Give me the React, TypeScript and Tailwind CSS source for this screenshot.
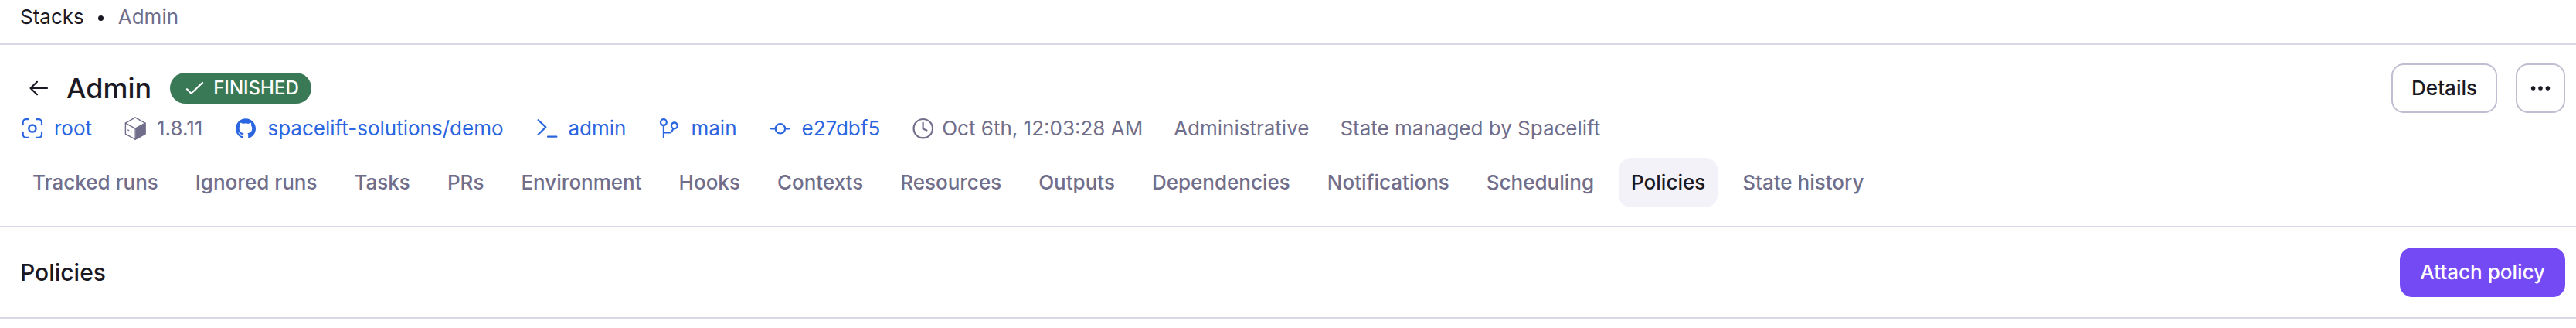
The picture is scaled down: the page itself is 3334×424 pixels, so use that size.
import type { ReactNode } from "react";
import { SiGithub } from "react-icons/si";

const TABS = [
  "Tracked runs",
  "Ignored runs",
  "Tasks",
  "PRs",
  "Environment",
  "Hooks",
  "Contexts",
  "Resources",
  "Outputs",
  "Dependencies",
  "Notifications",
  "Scheduling",
  "Policies",
  "State history",
];

function Icon({ children }: { children: ReactNode }) {
  return (
    <svg
      viewBox="0 0 32 32"
      fill="none"
      stroke="currentColor"
      strokeWidth="2.2"
      strokeLinecap="round"
      strokeLinejoin="round"
      className="size-8 shrink-0"
    >
      {children}
    </svg>
  );
}

const SpaceIcon = () => (
  <Icon>
    <path d="M3.7 11.2V8.2A4 4 0 0 1 7.7 4.2h2.9M21.1 4.2H24a4 4 0 0 1 4 4v3M28 20.8v3a4 4 0 0 1-4 4h-2.9M10.6 27.8H7.7a4 4 0 0 1-4-4v-3" />
    <circle cx="15.9" cy="16" r="4.6" strokeWidth="2.5" />
  </Icon>
);

const CubeIcon = () => (
  <Icon>
    <path d="M16 1.9 28.9 9.2v14L16 30.1 3.4 23.2V9.2z" strokeWidth="1.4" />
    <path d="M3.4 9.2 16 16.2 28.9 9.2" strokeWidth="1.4" />
    <path d="M16.2 16.4 29.2 9.2v14l-13 7.2z" fill="currentColor" strokeWidth="0.8" />
    <path d="m6.6 18 1.2.6M10.4 20l1.2.6" strokeWidth="1.2" />
  </Icon>
);

const GithubIcon = () => (
  <span className="flex size-8 items-center justify-center">
    <SiGithub className="size-[26px]" />
  </span>
);

const TerminalIcon = () => (
  <Icon>
    <path d="m4.6 5.2 9.8 9.2-9.8 9.4M17 26.7h11.4" />
  </Icon>
);

const BranchIcon = () => (
  <Icon>
    <circle cx="8.9" cy="8.1" r="3.9" strokeWidth="2.3" />
    <circle cx="22.8" cy="12.4" r="3.9" strokeWidth="2.3" />
    <path d="M8.9 12.2V28M8.9 21.4h7.9c1.4 0 2-.5 2.6-1.5l1.9-3.5" />
  </Icon>
);

const CommitIcon = () => (
  <Icon>
    <circle cx="15.9" cy="16.3" r="6.2" />
    <path d="M3.8 16.3h5.9M22.1 16.3h5.6" />
  </Icon>
);

const ClockIcon = () => (
  <Icon>
    <circle cx="15.8" cy="16.2" r="12.2" />
    <path d="M15.6 8.6v7.8l4.8 2.2" />
  </Icon>
);

type MetaProps = { icon?: ReactNode; link?: boolean; tight?: boolean; children: ReactNode };

function Meta({ icon, link, tight, children }: MetaProps) {
  return (
    <div
      className={`flex h-8 items-center ${tight ? "gap-2" : "gap-3"} ${link ? "text-[#2b65e0]" : "text-[#706e8a]"}`}
    >
      {icon}
      <span>{children}</span>
    </div>
  );
}

export default function App() {
  return (
    <div className="h-[424px] w-full overflow-hidden bg-white font-['Inter',sans-serif] text-[26px] leading-8 whitespace-nowrap text-[#1a1923]">
      <nav className="flex h-[58px] items-start border-b-2 border-[#d9d7e8] pt-1.5 pl-[26px]">
        <span>Stacks</span>
        <span className="mt-[14px] ml-[18px] size-[7px] rounded-full bg-[#1a1923]" />
        <span className="ml-[19px] text-[#706e8a]">Admin</span>
      </nav>

      <header className="flex h-[236px] items-start justify-between border-b-2 border-[#d9d7e8] pt-6 pr-[14px] pl-[26px]">
        <div className="flex flex-col pt-2.5">
          <div className="flex h-11 items-center">
            <button className="flex w-12 justify-center">
              <Icon>
                <path d="M27 16H5.5M14 7.8 5.5 16l8.5 8.2" />
              </Icon>
            </button>
            <h1 className="ml-3 text-[36px] leading-[44px] font-medium">Admin</h1>
            <div className="ml-6 flex h-10 items-center rounded-full bg-[#397956] px-4 text-white">
              <Icon>
                <path d="m6 17.2 5.4 5.6L26 9" />
              </Icon>
              <span className="ml-2 text-2xl font-medium">FINISHED</span>
            </div>
          </div>

          <div className="mt-[14px] flex gap-10">
            <Meta link icon={<SpaceIcon />}>root</Meta>
            <Meta icon={<CubeIcon />}>1.8.11</Meta>
            <Meta link icon={<GithubIcon />}>spacelift-solutions/demo</Meta>
            <Meta link icon={<TerminalIcon />}>admin</Meta>
            <Meta link icon={<BranchIcon />}>main</Meta>
            <Meta link icon={<CommitIcon />}>e27dbf5</Meta>
            <Meta tight icon={<ClockIcon />}>Oct 6th, 12:03:28 AM</Meta>
            <Meta>Administrative</Meta>
            <Meta>State managed by Spacelift</Meta>
          </div>

          <div className="mt-[22px] flex gap-4 font-medium">
            {TABS.map((tab) => (
              <button
                key={tab}
                className={`flex h-16 items-center rounded-2xl px-4 ${
                  tab === "Policies" ? "bg-[#f3f2f9] text-[#1a1923]" : "text-[#706e8a]"
                }`}
              >
                {tab}
              </button>
            ))}
          </div>
        </div>

        <div className="flex gap-6 font-medium">
          <button className="flex h-16 items-center rounded-2xl border-2 border-[#c1bed1] px-6">Details</button>
          <button className="flex size-16 items-center justify-center rounded-2xl border-2 border-[#c1bed1]">
            <svg viewBox="0 0 32 32" fill="currentColor" className="size-8">
              <circle cx="6.6" cy="16" r="2.8" />
              <circle cx="16" cy="16" r="2.8" />
              <circle cx="25.4" cy="16" r="2.8" />
            </svg>
          </button>
        </div>
      </header>

      <section className="flex h-[118px] items-center justify-between border-b-2 border-[#d9d7e8] pr-[14px] pl-[26px] font-medium">
        <h2 className="text-[30px] leading-9">Policies</h2>
        <button className="flex h-16 items-center rounded-2xl bg-[#744af5] px-[26px] text-white">Attach policy</button>
      </section>
    </div>
  );
}
